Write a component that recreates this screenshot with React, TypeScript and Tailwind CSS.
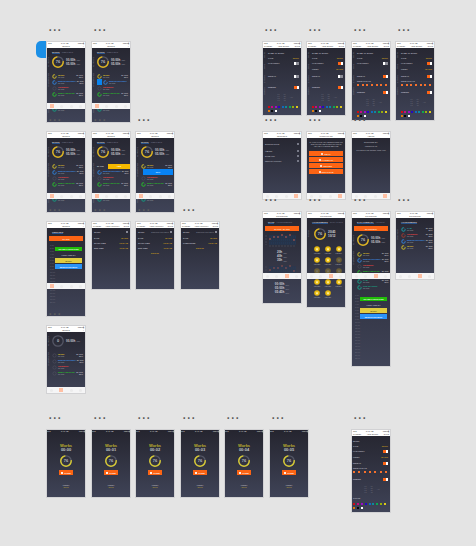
import React from "react";

type Kids = { children?: React.ReactNode };

const tiny = "text-[2px] leading-[2px] font-bold whitespace-nowrap";

function Header({ left, title, right, dark }: { left?: string; title?: string; right?: string; dark?: boolean }) {
  if (dark) {
    return (
      <div className="flex h-[2px] justify-between text-[2px] leading-[2px] font-bold text-[#c4c4c8]">
        <span>●●●</span>
        <span>9:41 AM</span>
        <span>100%▮</span>
      </div>
    );
  }
  return (
    <header className="h-[6px] shrink-0 bg-white text-[2px] leading-[2px] font-bold text-[#555]">
      <div className="flex h-[2px] justify-between px-px">
        <span>●●●</span>
        <span>9:41 AM</span>
        <span>100%▮</span>
      </div>
      <div className="flex h-[4px] items-center justify-between px-px whitespace-nowrap text-[#666]">
        <span className="min-w-[2px]">{left}</span>
        <span>{title}</span>
        <span className="min-w-[2px] text-right">{right}</span>
      </div>
    </header>
  );
}

function TabBar({ active }: { active: number }) {
  return (
    <nav className="absolute top-[61px] left-0 flex h-[6px] w-full items-center justify-around bg-white/95">
      {["Works", "Timer", "Stats", "More"].map((name, i) => (
        <button
          key={name}
          aria-label={name}
          className={i === active ? "h-[4px] w-[4px] bg-[#ffc0a4]" : "h-[3px] w-[3px] rounded-full bg-[#ebebeb]"}
        />
      ))}
    </nav>
  );
}

type BoardProps = Kids & { at: string; height: string; tab?: number };

function Board({ at, height, tab, children }: BoardProps) {
  return (
    <figure className={`absolute w-[38px] ${at}`}>
      <figcaption className="relative mb-[8px] pl-px text-[16px] leading-[16px] text-[#5c5c5c]">...</figcaption>
      <div
        className={`relative flex flex-col overflow-hidden bg-linear-to-b from-[#25252f] to-[#3f4357] shadow-[0_0_0_1px_#d2d2d4] ${height}`}
      >
        {children}
        {tab !== undefined && <TabBar active={tab} />}
      </div>
    </figure>
  );
}

function Ring({ color = "#dfb51c", value = "76", size = "big" }: { color?: string; value?: string; size?: string }) {
  const small = size === "small";
  return (
    <svg viewBox="0 0 12 12" className={small ? "size-[5px] shrink-0" : "size-[12px] shrink-0"}>
      <circle cx="6" cy="6" r={small ? 4 : 5.2} fill="none" stroke="#555766" strokeWidth={small ? 1.2 : 1.3} />
      {color !== "none" && (
        <circle
          cx="6"
          cy="6"
          r={small ? 4 : 5.2}
          fill="none"
          stroke={color}
          strokeWidth={small ? 2.4 : 1.4}
          pathLength="100"
          strokeDasharray="76 24"
          transform="rotate(-10 6 6)"
        />
      )}
      {!small && (
        <text x="6" y="7" textAnchor="middle" fontSize="4" fontWeight="700" fill="#b9b9c0">
          {value}
        </text>
      )}
    </svg>
  );
}

function Figure({ value, unit }: { value: string; unit: string }) {
  return (
    <div className="flex items-center gap-px text-[3px] leading-[3px] font-bold whitespace-nowrap text-[#d0d0d5]">
      <span>{value}</span>
      <span className="text-[2px] leading-[2px] text-[#777987]">{unit}</span>
    </div>
  );
}

function Summary({ color, small }: { color?: string; small?: boolean }) {
  return (
    <div className="flex h-[12px] items-center gap-[2px]">
      <Ring color={color} value={color === "none" ? "0" : "76"} />
      <div className="flex flex-col gap-px">
        <Figure value={small ? "20/45" : "00.00h"} unit={small ? "" : "/WK"} />
        {color !== "none" && <Figure value={small ? "10/12" : "05.00h"} unit={small ? "" : "/WK"} />}
      </div>
    </div>
  );
}

function Tabs({ first = "WORKS", second }: { first?: string; second?: string }) {
  return (
    <div className={`flex h-[8px] shrink-0 items-center gap-[2px] pl-[5px] ${tiny}`}>
      <button className="border-b border-[#28518a] text-[#d8d8dc]">{first}</button>
      {second && <button className="border-b border-transparent text-[#65677a]">{second}</button>}
    </div>
  );
}

function Side({ children, height }: Kids & { height: string }) {
  return (
    <div className={`w-[3px] shrink-0 pl-px text-center text-[2px] leading-[2px] whitespace-nowrap text-[#8a8c9a] [writing-mode:vertical-rl] ${height}`}>
      {children}
    </div>
  );
}

type Task = { name: string; color: string; ring: string; short?: boolean };

const tasks: Task[] = [
  { name: "WORK", color: "text-[#e6ca28]", ring: "#b9a928" },
  { name: "DESIGN PROJECT", color: "text-[#3f94f0]", ring: "#2c74c2" },
  { name: "SWIMMING", color: "text-[#e54444]", ring: "none", short: true },
  { name: "NEW LANGUAGE", color: "text-[#28cc24]", ring: "#25ab2a" },
];
const teal: Task = { name: "RUN TRAINING", color: "text-[#18ae8c]", ring: "#148f7a" };

function TaskRow({ task, plain, picked }: { task: Task; plain?: boolean; picked?: boolean }) {
  return (
    <div className={`flex h-[6px] items-center gap-px ${tiny}`}>
      {picked && <button aria-label="Edit" className="h-[6px] w-[5px] shrink-0 bg-[#0a84ee]" />}
      <Ring color={plain ? "none" : task.ring} size="small" />
      <div>
        <div className={task.color}>{task.name}</div>
        <div className="text-[#83858f]">00.00h</div>
      </div>
      {!task.short && !picked && (
        <div className="ml-auto text-right text-[#b4b5be]">
          <div>20 JUN</div>
          <div>50%</div>
        </div>
      )}
    </div>
  );
}

function Works({ mode, plain }: { mode?: "yellow" | "blue" | "picked"; plain?: boolean }) {
  return (
    <>
      <Header title="WORKS" right="+" />
      {plain ? <div className="h-[3px]" /> : <Tabs second="TIMETABLE" />}
      <div className="flex">
        <Side height="h-[12px]">SUMMARY</Side>
        <div className="pl-[2px]">
          <Summary color={plain ? "none" : undefined} />
        </div>
      </div>
      <div className="mt-[5px] flex">
        <Side height="h-[14px]">YOUR WORKS</Side>
        <div className="min-w-0 flex-1 pl-[2px]">
          {tasks.map((t, i) => {
            if (mode === "yellow" && i === 0)
              return (
                <div key={t.name} className={`flex h-[6px] items-center text-[#c4c4ca] ${tiny}`}>
                  <span>20 JUN</span>
                  <button className="ml-auto h-[5px] w-[22px] bg-[#f5b900] text-center text-white">ADD</button>
                </div>
              );
            if (mode === "blue" && i === 1)
              return (
                <div key={t.name} className="pr-px pl-[2px]">
                  <button className={`block h-[6px] w-full bg-[#0883f4] text-center text-[#cfe6ff] ${tiny}`}>EDIT</button>
                </div>
              );
            return (
              <div key={t.name} className="pr-[2px]">
                <TaskRow task={t} plain={plain} picked={mode === "picked" && i === 1} />
              </div>
            );
          })}
        </div>
      </div>
      {!plain && (
        <div className="mt-[9px] flex pr-[2px]">
          <Side height="h-[8px]">DONE</Side>
          <div className="flex-1 pl-[2px]">
            <TaskRow task={{ ...teal, short: true }} />
          </div>
        </div>
      )}
    </>
  );
}

function OrangeButton({ children }: Kids) {
  return (
    <button className={`mx-[2px] h-[5px] shrink-0 bg-[#fc6414] text-center text-[#ffe5d4] ${tiny}`}>{children}</button>
  );
}

function Timeline({ rows }: { rows: number }) {
  return (
    <div className="flex pr-[3px]">
      <div className="w-[8px] pl-[3px] text-[2px] leading-[3px] text-[#696b79]">
        {Array.from({ length: rows }, (_, i) => (
          <div key={i}>{`${i + 1}:00`}</div>
        ))}
      </div>
      <div className={`flex flex-1 flex-col pt-[3px] text-center text-white ${tiny}`}>
        <button className="h-[4px] bg-[#20bd08]">LEARN LANGUAGES</button>
        <div className="flex h-[7px] items-center justify-center text-[#b3b4bc]">FREE TIME 2H</div>
        <button className="mb-px h-[5px] bg-[#e1cd40] text-[#5e571e]">WORK</button>
        <button className="h-[5px] bg-[#2994f9]">DESIGN PROJECT</button>
      </div>
    </div>
  );
}

function Field({ label, value, h = "h-[5px]", icon }: { label: string; value?: string; h?: string; icon?: boolean }) {
  return (
    <div className={`flex items-center justify-between ${h} ${tiny}`}>
      <span className="text-[#bcbdc5]">{label}</span>
      {value && <span className="text-[#c89d20]">{value}</span>}
      {icon && <button aria-label="Choose" className="size-[2px] bg-[#777987]" />}
    </div>
  );
}

function Form({ note, rows }: { note?: boolean; rows: [string, string][] }) {
  return (
    <>
      <Header left="CANCEL" title="ADD ACTIVITY" right="SAVE" />
      <div className="flex flex-col px-[2px] pt-px">
        <div className={`flex h-[6px] items-center text-[#bcbdc5] ${tiny}`}>
          <span>WORK</span>
          <span className="ml-auto pr-px text-[#777987]">{note ? "DESIGN PROJECT" : ""}</span>
          <button aria-label="Choose work" className="size-[2px] bg-[#888995]" />
        </div>
        {rows.map(([a, b]) => (
          <Field key={a} label={a} value={b} />
        ))}
        {note && <button className={`mt-[2px] self-center text-[#c89d20] ${tiny}`}>DELETE</button>}
      </div>
    </>
  );
}

function Toggle({ label, on }: { label: string; on?: boolean }) {
  return (
    <label className={`flex h-[6px] items-center justify-between text-[#bcbdc5] ${tiny}`}>
      {label}
      <input
        type="checkbox"
        defaultChecked={on}
        className="h-[3px] w-[5px] appearance-none border-l-2 border-white bg-[#8b8c96] checked:border-r-2 checked:border-l-0 checked:bg-[#ff6414]"
      />
    </label>
  );
}

function Days() {
  return (
    <div className="flex h-[3px] items-center justify-between pr-px">
      {["Mon", "Tue", "Wed", "Thu", "Fri", "Sat", "Sun"].map((d) => (
        <button key={d} aria-label={d} className="size-[2px] bg-[#f5702c]" />
      ))}
    </div>
  );
}

function Wheels() {
  return (
    <div className="flex h-[9px] items-center justify-center gap-[4px] pl-[3px] text-[2px] leading-[2px] text-[#6b6d7b]">
      <div>00<br />01<br />02<br />03</div>
      <div>00<br />15<br />30<br />45</div>
      <div>AM</div>
    </div>
  );
}

const swatches = [
  "bg-[#d50912]", "bg-[#cb0781]", "bg-[#9d08c8]", "bg-[#2606c5]", "bg-[#1269be]", "bg-[#0b8a9d]",
  "bg-[#0ba850]", "bg-[#98ae0b]", "bg-[#dec91b]", "bg-[#dc7a0b]", "bg-[#07070a]", "bg-white",
];

function Swatches() {
  return (
    <div className="grid grid-cols-9 gap-y-[2px] pt-px">
      {swatches.map((c) => (
        <button key={c} aria-label="Colour" className={`size-[2px] ${c}`} />
      ))}
    </div>
  );
}

function Settings({ limit, days, side = true }: { limit?: boolean; days?: boolean; side?: boolean }) {
  return (
    <>
      <Header left="CANCEL" title="ADD WORK" right="SAVE" />
      <div className="flex pr-[2px]">
        {side ? (
          <div className="pt-[2px]">
            <Side height="h-[10px]">NAME</Side>
            <Side height="h-[12px]">TIME</Side>
            <Side height="h-[13px]">REPEAT</Side>
            <Side height="h-[12px]">REMIND</Side>
          </div>
        ) : (
          <div className="w-px" />
        )}
        <div className={`min-w-0 flex-1 pt-[2px] ${side ? "pl-[2px]" : ""}`}>
          <Field label={side ? "NAME OF WORK" : "WORK"} />
          <Field label="TYPE" value="WORK" />
          <Toggle label="HAS FINISH" on={limit} />
          {limit ? <Field label="FINISH" value="20 JUN" /> : <div className="h-[5px]" />}
          <div className={side ? "h-[2px]" : "h-px"} />
          <Toggle label="REPEAT" on={days} />
          {days && (
            <>
              <Field label="REPEAT DAYS" h="h-[4px]" />
              <Days />
            </>
          )}
          <div className={days ? "h-[3px]" : "h-[5px]"} />
          <Toggle label="REMIND" on />
          <div className="mt-[2px]">
            <Wheels />
          </div>
          {side ? (
            <div className="h-[4px]" />
          ) : (
            <div className="pt-px">
              <Field label="COLOR" h="h-[8px]" />
            </div>
          )}
          <Swatches />
        </div>
      </div>
    </>
  );
}

function Timer({ time }: { time: string }) {
  return (
    <>
      <Header dark />
      <div className="flex flex-col items-center pt-[12px]">
        <div className="text-[4px] leading-[4px] font-bold text-[#bdae2c]">Works</div>
        <div className="mb-[3px] text-[4px] leading-[4px] font-bold text-[#c4c4ca]">{time}</div>
        <Ring color="#d8cb32" />
        <button className={`mt-[3px] flex h-[5px] w-[14px] items-center justify-center gap-px bg-[#fc6414] text-white ${tiny}`}>
          <span className="size-[2px] bg-[#fff0e6]" />
          PAUSE
        </button>
        <div className={`mt-[9px] text-center ${tiny}`}>
          <div className="text-[#b6b7be]">FINISH</div>
          <div className="text-[#a8933a]">00:00</div>
        </div>
      </div>
    </>
  );
}

function Options() {
  return (
    <>
      <Header title="SETTINGS" />
      <div className="flex flex-col px-[2px] pt-[3px]">
        <Field label="NOTIFICATION" icon />
        <div className="h-[2px]" />
        <Field label="ABOUT" icon />
        <Field label="RATE APP" icon />
        <Field label="PRIVACY POLICY" icon />
      </div>
    </>
  );
}

function Support() {
  return (
    <>
      <Header left="‹" title="CONTACT US" />
      <p className="h-[13px] px-[2px] pt-[3px] text-center text-[2px] leading-[2px] font-bold text-[#a4a5ae]">
        IF YOU HAVE ANY QUESTIONS OR IDEAS PLEASE CONTACT US IN ANY WAY LISTED BELOW
      </p>
      <div className="flex flex-col gap-px px-[2px]">
        {["EMAIL", "FACEBOOK", "TWITTER", "INSTAGRAM"].map((n) => (
          <button key={n} className={`flex h-[5px] items-center justify-center gap-px bg-[#fc6414] text-[#ffe5d4] ${tiny}`}>
            <span className="size-[2px] bg-[#ffd6bd]" />
            {n}
          </button>
        ))}
      </div>
    </>
  );
}

function About() {
  return (
    <>
      <Header left="‹" title="ABOUT" />
      <div className={`flex flex-col items-center gap-[2px] pt-[3px] text-[#a4a5ae] ${tiny}`}>
        <p>DESIGNED BY</p>
        <p>VERSION 1.0</p>
        <p>THANKS FOR USING OUR APP</p>
      </div>
    </>
  );
}

const points: [number, number][] = [[5, 5], [9, 3], [13, 3], [17, 1], [21, 3], [25, 1], [29, 6]];

function Chart() {
  return (
    <svg viewBox="0 0 34 14" className="mx-[2px] h-[14px] shrink-0">
      <rect x="4" y="2" width="27" height="10" fill="#1c3a5c" opacity="0.45" />
      <path d="M4 4H31M4 7H31M4 10H31" stroke="#27507c" strokeWidth="0.3" strokeDasharray="1 1" />
      {points.map(([x, y]) => (
        <circle key={x} cx={x} cy={y + 1} r="0.7" fill="#f06a50" />
      ))}
      <path d="M1 2V12M4 13H31" stroke="#565868" strokeWidth="0.5" strokeDasharray="2 1" />
    </svg>
  );
}

function Totals({ values }: { values: string[] }) {
  return (
    <div className="flex flex-col items-center gap-px">
      {values.map((v) => (
        <Figure key={v} value={v} unit="/WK" />
      ))}
    </div>
  );
}

function Stats() {
  return (
    <>
      <Header title="STATISTICS" />
      <Tabs first="STATS" second="ACHIEVEMENTS" />
      <OrangeButton>20 JUN - 27 JUN</OrangeButton>
      <div className="h-[2px]" />
      <Chart />
      <div className="h-[4px]" />
      <Totals values={["20h", "40h", "35h"]} />
      <div className="h-[2px] shrink-0" />
      <div className="h-[14px] shrink-0 opacity-70">
        <Chart />
      </div>
      <div className="pt-[5px]">
        <Totals values={["00:00h", "05:00h", "05:45h"]} />
      </div>
    </>
  );
}

function Badges() {
  return (
    <>
      <Header title="STATISTICS" />
      <Tabs first="ACHIEVEMENTS" second="DAILY TASKS" />
      <div className="mt-[2px] flex">
        <Side height="h-[12px]">SCORE</Side>
        <div className="pl-[4px]">
          <Summary small />
        </div>
      </div>
      <div className="mt-[6px] grid grid-cols-3 pr-px pl-[5px]">
        {Array.from({ length: 14 }, (_, i) => (
          <div key={i} className="flex h-[11px] flex-col items-center">
            <svg viewBox="0 0 6 6" className={i >= 5 && i < 9 ? "size-[6px] opacity-30" : "size-[6px]"}>
              <circle cx="3" cy="3" r="2.8" fill="#e9b90b" />
              <path d="M3 1.5L3.5 2.6L4.6 2.7L3.8 3.4L4 4.5L3 4L2 4.5L2.2 3.4L1.4 2.7L2.5 2.6Z" fill="#fff1a2" />
            </svg>
            <span className={`text-[#9b9ca6] ${tiny}`}>LEVEL</span>
          </div>
        ))}
      </div>
    </>
  );
}

function Daily() {
  return (
    <>
      <Header title="STATISTICS" />
      <Tabs first="DAILY SUMMARY" second="ACHIEVE" />
      <OrangeButton>20 JUN 2017</OrangeButton>
      <div className="mt-[3px] flex">
        <Side height="h-[12px]">SUMMARY</Side>
        <div className="pl-[2px]">
          <Summary />
        </div>
      </div>
      <div className="mt-[5px] flex pr-[2px]">
        <Side height="h-[14px]">YOUR WORKS</Side>
        <div className="flex-1 pl-[2px]">
          {tasks.map((t) => (
            <TaskRow key={t.name} task={t} />
          ))}
          <div className="h-[3px]" />
          <TaskRow task={{ ...teal, name: "GYM" }} />
          <TaskRow task={{ ...teal, short: true }} />
        </div>
      </div>
      <div className="mt-[4px]">
        <Timeline rows={22} />
      </div>
    </>
  );
}

function Activities() {
  const list: Task[] = [
    { name: "GYM", color: "text-[#18a7a7]", ring: "#168a94" },
    { ...tasks[2], ring: "#8a332c", short: false },
    tasks[1],
    tasks[0],
  ];
  return (
    <>
      <Header title="STATISTICS" />
      <Tabs first="ACHIEVEMENTS" />
      <div className="flex pr-[2px]">
        <Side height="h-[16px]">ACTIVITIES</Side>
        <div className="flex-1 pl-[2px]">
          {list.map((t) => (
            <TaskRow key={t.name} task={t} />
          ))}
        </div>
      </div>
    </>
  );
}

const timers: [string, string][] = [
  ["left-[47px] top-[406px]", "00:00"],
  ["left-[92px] top-[406px]", "00:01"],
  ["left-[136px] top-[406px]", "00:02"],
  ["left-[181px] top-[406px]", "00:03"],
  ["left-[225px] top-[406px]", "00:04"],
  ["left-[270px] top-[406px]", "00:05"],
];

export default function App() {
  return (
    <main className="relative min-h-[546px] w-full overflow-hidden bg-[#e4e4e4] font-['Liberation_Sans',sans-serif]">
      <div className="absolute top-[41px] left-[36px] h-[17px] w-[12px] rounded-l-[5px] bg-[#1b8fe6]" />

      <Board at="left-[47px] top-[18px]" height="h-[80px]" tab={0}><Works /></Board>
      <Board at="left-[92px] top-[18px]" height="h-[80px]" tab={0}><Works mode="picked" /></Board>
      <Board at="left-[47px] top-[108px]" height="h-[80px]" tab={0}><Works /></Board>
      <Board at="left-[92px] top-[108px]" height="h-[80px]" tab={0}><Works mode="yellow" /></Board>
      <Board at="left-[136px] top-[108px]" height="h-[80px]" tab={0}><Works mode="blue" /></Board>

      <Board at="left-[47px] top-[198px]" height="h-[94px]" tab={0}>
        <Header title="WORKS" right="+" />
        <Tabs first="TIMETABLE" />
        <OrangeButton>20 JUN</OrangeButton>
        <div className="mt-[3px]">
          <Timeline rows={20} />
        </div>
      </Board>
      <Board at="left-[92px] top-[198px]" height="h-[67px]">
        <Form rows={[["DATE", "20 JUN"], ["START TIME", "10:00 AM"], ["END TIME", "11:00 AM"]]} />
      </Board>
      <Board at="left-[136px] top-[198px]" height="h-[67px]">
        <Form note rows={[["DATE", "20 JUN"], ["START TIME", "10:00 AM"], ["END TIME", "11:00 AM"]]} />
      </Board>
      <Board at="left-[181px] top-[198px]" height="h-[67px]">
        <Form note rows={[["DATE", "20 JUN"], ["COMPLETED", "10:00 AM"]]} />
      </Board>
      <Board at="left-[47px] top-[302px]" height="h-[67px]" tab={1}><Works plain /></Board>

      <Board at="left-[263px] top-[18px]" height="h-[73px]"><Settings /></Board>
      <Board at="left-[307px] top-[18px]" height="h-[73px]"><Settings limit /></Board>
      <Board at="left-[352px] top-[18px]" height="h-[78px]"><Settings days /></Board>
      <Board at="left-[396px] top-[18px]" height="h-[78px]"><Settings limit days /></Board>

      <Board at="left-[263px] top-[108px]" height="h-[67px]" tab={3}><Options /></Board>
      <Board at="left-[307px] top-[108px]" height="h-[67px]" tab={3}><Support /></Board>
      <Board at="left-[352px] top-[108px]" height="h-[67px]" tab={3}><About /></Board>

      <Board at="left-[263px] top-[188px]" height="h-[91px]" tab={2}><Stats /></Board>
      <Board at="left-[307px] top-[188px]" height="h-[95px]" tab={2}><Badges /></Board>
      <Board at="left-[352px] top-[188px]" height="h-[154px]" tab={2}><Daily /></Board>
      <Board at="left-[396px] top-[188px]" height="h-[67px]" tab={2}><Activities /></Board>

      {timers.map(([at, time]) => (
        <Board key={time} at={at} height="h-[67px]"><Timer time={time} /></Board>
      ))}
      <Board at="left-[352px] top-[406px]" height="h-[82px]"><Settings limit days side={false} /></Board>
    </main>
  );
}
